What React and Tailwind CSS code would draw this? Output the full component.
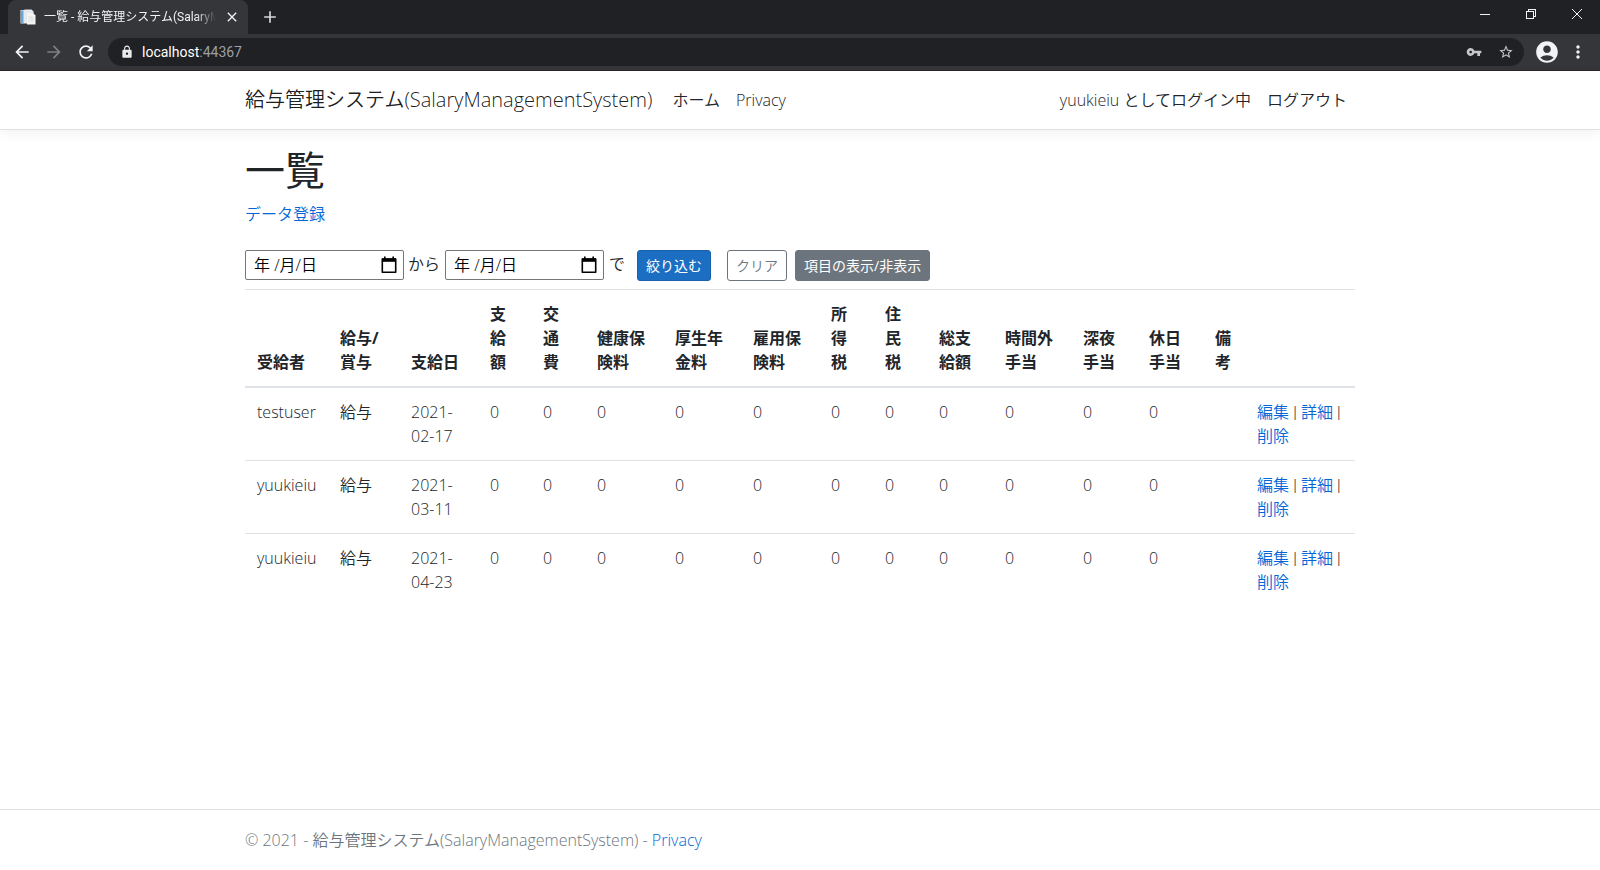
import React, { useState } from "react";
import {
    MdAccountCircle,
    MdAdd,
    MdArrowBack,
    MdArrowForward,
    MdClose,
    MdLock,
    MdMoreVert,
    MdRefresh,
    MdStarBorder,
    MdVpnKey,
} from "react-icons/md";

const COLUMNS = [
    { label: "受給者", width: "w-[83px]" },
    { label: "給与/賞与", width: "w-[71px]" },
    { label: "支給日", width: "w-[79px]" },
    { label: "支給額", width: "w-[53px]" },
    { label: "交通費", width: "w-[54px]" },
    { label: "健康保険料", width: "w-[78px]" },
    { label: "厚生年金料", width: "w-[78px]" },
    { label: "雇用保険料", width: "w-[78px]" },
    { label: "所得税", width: "w-[54px]" },
    { label: "住民税", width: "w-[54px]" },
    { label: "総支給額", width: "w-[66px]" },
    { label: "時間外手当", width: "w-[78px]" },
    { label: "深夜手当", width: "w-[66px]" },
    { label: "休日手当", width: "w-[66px]" },
    { label: "備考", width: "w-[42px]" },
    { label: "", width: "w-[110px]" },
];

const ROWS = [
    { id: 1, user: "testuser", kind: "給与", date: "2021-02-17", amounts: [0, 0, 0, 0, 0, 0, 0, 0, 0, 0, 0], note: "" },
    { id: 2, user: "yuukieiu", kind: "給与", date: "2021-03-11", amounts: [0, 0, 0, 0, 0, 0, 0, 0, 0, 0, 0], note: "" },
    { id: 3, user: "yuukieiu", kind: "給与", date: "2021-04-23", amounts: [0, 0, 0, 0, 0, 0, 0, 0, 0, 0, 0], note: "" },
];

export default function App() {
    return (
        <div className="flex min-h-screen flex-col bg-white font-['Open_Sans','Noto_Sans_CJK_JP',sans-serif] text-base font-[350] text-[#212529]">
            <BrowserChrome />
            <SiteHeader />
            <main className="mx-auto mt-4 w-full max-w-[1140px] flex-1 px-[15px]">
                <h1 className="mb-2 text-[40px] font-normal leading-[48px]">一覧</h1>
                <p className="mb-6">
                    <a href="#create" className="text-[#0366d6] hover:underline">データ登録</a>
                </p>
                <FilterForm />
                <SalaryTable />
            </main>
            <footer className="border-t border-[#dee2e6] leading-[60px] text-[#6c757d]">
                <div className="mx-auto w-full max-w-[1140px] px-[15px]">
                    © 2021 - 給与管理システム(SalaryManagementSystem) -{" "}
                    <a href="#privacy" className="text-[#0366d6] hover:underline">Privacy</a>
                </div>
            </footer>
        </div>
    );
}

/**
 * BrowserChrome - dark tab strip and address bar.
 */
function BrowserChrome() {
    return (
        <div className="border-b border-[#2b2526] bg-[#202124] font-[Roboto,'Noto_Sans_CJK_JP',sans-serif] font-normal text-[#f1f3f4]">
            <div className="flex h-[34px] items-stretch pl-2">
                <div className="flex w-60 items-center rounded-t-lg bg-[#35363a] pl-3 pr-1">
                    <NotebookIcon />
                    <span className="ml-2 flex-1 overflow-hidden whitespace-nowrap text-xs [mask-image:linear-gradient(to_right,black_88%,transparent)]">
                        一覧 - 給与管理システム(SalaryManagementSystem)
                    </span>
                    <button type="button" aria-label="Close tab" className="ml-1 p-1">
                        <MdClose className="size-4" />
                    </button>
                </div>
                <button type="button" aria-label="New tab" className="ml-3 text-[#d5d7da]">
                    <MdAdd className="size-5" />
                </button>
                <div className="ml-auto flex h-7 items-center">
                    <button type="button" aria-label="Minimize" className="flex w-[46px] justify-center">
                        <svg viewBox="0 0 10 10" className="size-2.5" stroke="currentColor" shapeRendering="crispEdges">
                            <path d="M0 5.5h10" />
                        </svg>
                    </button>
                    <button type="button" aria-label="Restore" className="flex w-[46px] justify-center">
                        <svg viewBox="0 0 10 10" className="size-2.5" fill="none" stroke="currentColor" shapeRendering="crispEdges">
                            <path d="M0.5 2.5h7v7h-7zM2.5 2.5v-2h7v7h-2" />
                        </svg>
                    </button>
                    <button type="button" aria-label="Close" className="flex w-[46px] justify-center">
                        <svg viewBox="0 0 10 10" className="size-2.5" fill="none" stroke="currentColor">
                            <path d="M0 0l10 10M10 0L0 10" />
                        </svg>
                    </button>
                </div>
            </div>
            <div className="flex h-9 items-center bg-[#35363a] pl-3 pr-3">
                <button type="button" aria-label="Back">
                    <MdArrowBack className="size-5" />
                </button>
                <button type="button" aria-label="Forward" className="ml-3 text-[#7d7f83]">
                    <MdArrowForward className="size-5" />
                </button>
                <button type="button" aria-label="Reload" className="ml-3">
                    <MdRefresh className="size-5" />
                </button>
                <div className="ml-3 mr-2.5 flex h-7 flex-1 items-center rounded-full bg-[#202124] pl-3 pr-2.5">
                    <MdLock className="size-3.5 text-[#e8eaed]" />
                    <span className="ml-2 text-sm text-white">
                        localhost<span className="text-[#9aa0a6]">:44367</span>
                    </span>
                    <MdVpnKey className="ml-auto size-4 text-[#c6c7c9]" />
                    <MdStarBorder className="ml-4 size-4 text-[#c6c7c9]" />
                </div>
                <button type="button" aria-label="Profile">
                    <MdAccountCircle className="size-[26px]" />
                </button>
                <button type="button" aria-label="Menu" className="ml-2">
                    <MdMoreVert className="size-5" />
                </button>
            </div>
        </div>
    );
}

function SiteHeader() {
    return (
        <header className="border-b border-[#dee2e6] bg-white py-[9px] shadow-[0_4px_12px_rgba(0,0,0,0.05)]">
            <nav className="mx-auto flex w-full max-w-[1140px] items-center px-[15px]">
                <a href="#top" className="mr-3 text-xl leading-8 text-black/90">
                    給与管理システム(SalaryManagementSystem)
                </a>
                <ul className="flex flex-1">
                    <li><a href="#home" className="block p-2">ホーム</a></li>
                    <li><a href="#privacy" className="block p-2">Privacy</a></li>
                </ul>
                <ul className="flex">
                    <li><a href="#account" className="block p-2">yuukieiu としてログイン中</a></li>
                    <li><button type="button" className="block p-2">ログアウト</button></li>
                </ul>
            </nav>
        </header>
    );
}

function FilterForm() {
    const [from, setFrom] = useState("年 /月/日");
    const [to, setTo] = useState("年 /月/日");

    const handleClear = () => {
        setFrom("年 /月/日");
        setTo("年 /月/日");
    };

    return (
        <form onSubmit={(e) => e.preventDefault()} className="mb-2 flex items-start">
            <DateField label="開始日" value={from} onChange={setFrom} />
            <span className="ml-1 mr-[5px] leading-7">から</span>
            <DateField label="終了日" value={to} onChange={setTo} />
            <span className="ml-[5px] mr-3 leading-7">で</span>
            <button type="submit" className="rounded-[3px] border border-[#1861ac] bg-[#1b6ec2] px-2 py-1 text-sm font-normal leading-[21px] text-white">
                絞り込む
            </button>
            <button type="button" onClick={handleClear} className="ml-4 rounded-[3px] border border-[#6c757d] px-2 py-1 text-sm leading-[21px] text-[#6c757d]">
                クリア
            </button>
            <button type="button" className="ml-2 rounded-[3px] border border-[#6c757d] bg-[#6c757d] px-2 py-1 text-sm font-normal leading-[21px] text-white">
                項目の表示/非表示
            </button>
        </form>
    );
}

function DateField({ label, value, onChange }) {
    return (
        <div className="flex h-[30px] w-[159px] items-center rounded-xs border border-[#767676] pl-2 pr-1.5 text-black">
            <input
                type="text"
                aria-label={label}
                value={value}
                onChange={(e) => onChange(e.target.value)}
                className="w-full min-w-0 flex-1 bg-transparent outline-none"
            />
            <svg viewBox="0 0 16 18" className="h-[18px] w-4 shrink-0" fill="none" stroke="currentColor" strokeWidth="1.6">
                <path d="M1.3 3h13.4v13.2H1.3z" strokeLinejoin="round" />
                <path d="M1 2.4h14v3.4H1z" fill="currentColor" stroke="none" />
                <path d="M3.8 0.4v2.4M12.2 0.4v2.4" />
            </svg>
        </div>
    );
}

function SalaryTable() {
    return (
        <table className="mb-4 w-full table-fixed border-collapse">
            <thead>
                <tr>
                    {COLUMNS.map((col, i) => (
                        <th key={i} className={`${col.width} border-t border-b-2 border-[#dee2e6] p-3 text-left align-bottom font-bold`}>
                            {col.label}
                        </th>
                    ))}
                </tr>
            </thead>
            <tbody>
                {ROWS.map((row) => (
                    <tr key={row.id} className="border-t border-[#dee2e6] align-top first:border-t-0">
                        <td className="p-3">{row.user}</td>
                        <td className="p-3">{row.kind}</td>
                        <td className="p-3">{row.date}</td>
                        {row.amounts.map((amount, i) => (
                            <td key={i} className="p-3">{amount}</td>
                        ))}
                        <td className="p-3">{row.note}</td>
                        <td className="p-3">
                            <RowLink href="#edit">編集</RowLink> <Divider /> <RowLink href="#details">詳細</RowLink> <Divider />{" "}
                            <RowLink href="#delete">削除</RowLink>
                        </td>
                    </tr>
                ))}
            </tbody>
        </table>
    );
}

function RowLink({ href, children }) {
    return (
        <a href={href} className="whitespace-nowrap text-[#0366d6] hover:underline">
            {children}
        </a>
    );
}

function Divider() {
    return <span className="font-[Roboto,sans-serif] leading-none">|</span>;
}

// Favicon: blue notebook with two sheets of paper in front
function NotebookIcon() {
    return (
        <svg viewBox="0 0 16 16" className="size-4 shrink-0">
            <path d="M0.5 1h9v13.500h-9z" fill="#e9eef2" />
            <path d="M1 1.500h2.500v12.500H1z" fill="#5fa8dc" />
            <path d="M4.500 0.500h7l2 2V13.500h-9z" fill="#e6e8ea" />
            <path d="M7 4h6l2.500 2.500V15.500H7z" fill="#f3f3f3" />
            <path d="M8.500 8h5M8.500 10h5M8.500 12h5" stroke="#cfd3d6" strokeWidth="0.7" />
        </svg>
    );
}
